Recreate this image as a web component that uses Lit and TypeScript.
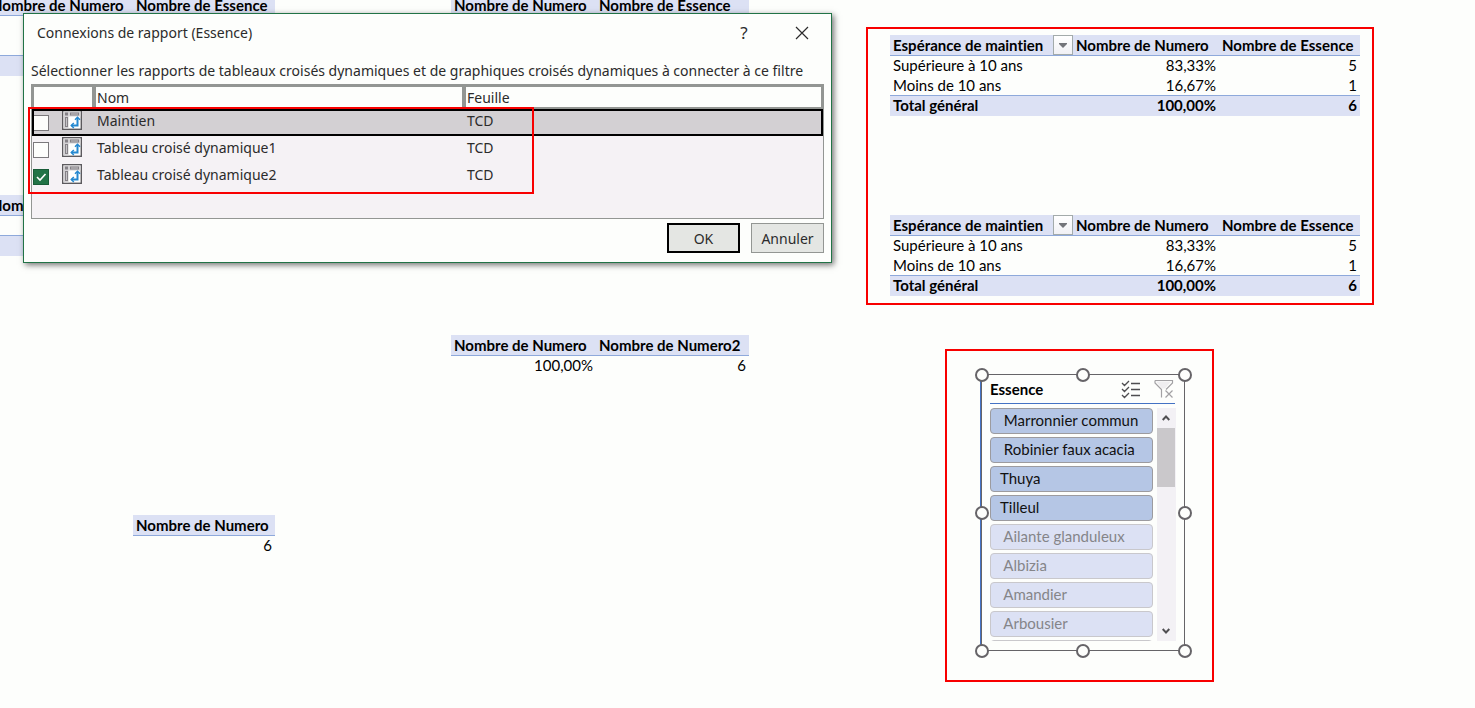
import { LitElement, html, svg, css, nothing } from "lit";
import { customElement, property } from "lit/decorators.js";
import { classMap } from "lit/directives/class-map.js";

@customElement("pivot-table")
class PivotTable extends LitElement {
  @property({ attribute: false }) heads: string[] = [];
  @property({ attribute: false }) rows: string[][] = [];
  @property({ attribute: false }) total: string[] | null = null;
  @property({ type: Boolean }) filter = false;

  static styles = css`
    :host { display: block; }
    table { border-collapse: separate; border-spacing: 0; table-layout: fixed; width: 100%; }
    th, td { box-sizing: border-box; height: 20px; padding: 0 3px; line-height: 18px; text-align: right; vertical-align: top; white-space: nowrap; }
    thead th { height: 21px; background: #dce1f4; border-bottom: 1px solid #8ea9db; text-align: left; font-weight: 700; line-height: 20px; }
    .label { text-align: left; }
    .closing td, .closing th { border-bottom: 1px solid #8ea9db; }
    tfoot td, tfoot th { background: #dce1f4; font-weight: 700; }
    th.label { font-weight: 400; }
    tfoot th.label { font-weight: 700; }
    .wide { width: 183px; padding-right: 0; }
    .num { width: 145px; }
    .wide + .num { width: 146px; }
    .field { display: flex; justify-content: space-between; align-items: center; }
    .drop { box-sizing: border-box; width: 20px; height: 20px; padding: 0; border: 1px solid #a3abab; background: linear-gradient(#fff, #f1f1f5); display: flex; align-items: center; justify-content: center; }
  `;

  render() {
    const cell = (v: string, i: number) =>
      this.filter && i === 0 ? html`<th scope="row" class="label">${v}</th>` : html`<td>${v}</td>`;
    return html`<table>
      <thead><tr>${this.heads.map((h, i) => this.filter && i === 0
        ? html`<th scope="col" class="wide"><div class="field">${h}
            <button class="drop" aria-label="Filtrer"><svg width="8" height="5" viewBox="0 0 8 5"><path d="M0 0H8V1L4 5L0 1Z" fill="#73757a"/></svg></button></div></th>`
        : html`<th scope="col" class=${classMap({ num: i < this.heads.length - 1 })}>${h}</th>`)}</tr></thead>
      <tbody>${this.rows.map((r, i) => html`<tr class=${classMap({ closing: !!this.total && i === this.rows.length - 1 })}>${r.map(cell)}</tr>`)}</tbody>
      ${this.total ? html`<tfoot><tr>${this.total.map(cell)}</tr></tfoot>` : nothing}
    </table>`;
  }
}

const pivotIcon = svg`
  <rect x=".7" y=".7" width="18.600" height="18.600" fill="#fdfefd" stroke="#5c5a5e" stroke-width="1.400"/>
  <path d="M1.500 1.500H18.500V6.500H6.500V18.500H1.500Z" fill="#d3d1d4"/>
  <rect x="3.500" y="3" width="2" height="2" fill="#fff" stroke="#858287"/>
  <rect x="8.500" y="3" width="8" height="2" fill="#c6c4c7" stroke="#858287"/>
  <rect x="3.500" y="7.500" width="2" height="9" fill="#c6c4c7" stroke="#858287"/>
  <path d="M15.500 8V15.500H9.500" fill="none" stroke="#2488d0" stroke-width="2"/>
  <path d="M13 9.800L15.500 7.300L18 9.800M11.800 13L9.300 15.500L11.800 18" fill="none" stroke="#2488d0" stroke-width="1.500"/>`;

@customElement("report-connections")
class ReportConnections extends LitElement {
  static styles = css`
    :host { display: block; box-sizing: border-box; padding: 0 7px 9px; background: #fdfefc; color: #2b2b2b; border: 1px solid #217346; box-shadow: 2px 2px 6px rgba(0, 0, 0, .55); font: 14px/20px "Noto Sans", "Open Sans", sans-serif; }
    header { display: flex; align-items: center; height: 38px; padding: 0 7px 0 6px; }
    h2 { flex: 1; margin: 0; font: inherit; }
    .glyph { width: 28px; height: 28px; margin-right: 30px; padding: 0; border: 0; background: none; color: inherit; font: 17px/28px "Noto Sans", sans-serif; display: flex; align-items: center; justify-content: center; }
    .glyph:last-child { margin-right: 1px; }
    p { margin: 9px 0 3px; white-space: nowrap; }
    .list { position: relative; box-sizing: border-box; height: 135px; border: 1px solid #939693; background: #f5f2f5; }
    table { width: 100%; border-collapse: separate; border-spacing: 0; table-layout: fixed; }
    th, td { box-sizing: border-box; padding: 0 0 0 1px; text-align: left; font-weight: 400; vertical-align: top; }
    thead th { height: 24px; line-height: 20px; vertical-align: bottom; border: solid #939693; border-width: 2px 4px 2px 0; background: #fdfefc; padding-top: 1px; line-height: 19px; }
    thead th:first-child { width: 64px; border-left-width: 2px; }
    thead th:nth-child(2) { width: 370px; }
    thead th:last-child { border-right-width: 2px; }
    tbody td { height: 27px; line-height: 24px; }
    .selected { background: #d3d0d3; outline: 2px solid #000; outline-offset: -2px; }
    .pick { display: flex; align-items: flex-start; gap: 13px; padding-top: 1px; }
    input { appearance: none; box-sizing: border-box; width: 16px; height: 16px; margin: 5px 0 0; border: 1px solid #7b797c; background: #fdfefc; }
    input:checked { border-color: #185c37; background: #217346 url('data:image/svg+xml,<svg xmlns="http://www.w3.org/2000/svg" viewBox="0 0 14 14"><path d="M3 7l3 3 5.500-6" fill="none" stroke="white" stroke-width="1.600"/></svg>') center / 14px no-repeat; }
    .mark { position: absolute; left: -4px; top: 22px; box-sizing: border-box; width: 506px; height: 87px; border: 2px solid #f80000; pointer-events: none; }
    footer { display: flex; justify-content: flex-end; gap: 11px; margin-top: 4px; }
    .action { box-sizing: border-box; width: 73px; height: 30px; padding: 1px 0 0; border: 1px solid #939693; background: #e4e6e3; color: inherit; font: inherit; }
    .default { border: 2px solid #000; }
  `;

  render() {
    const rows = ["Maintien", "Tableau croisé dynamique1", "Tableau croisé dynamique2"];
    return html`
      <header>
        <h2>Connexions de rapport (Essence)</h2>
        <button class="glyph">?</button>
        <button class="glyph" aria-label="Fermer"><svg width="14" height="14" viewBox="0 0 14 14"><path d="M1 1L13 13M13 1L1 13" stroke="#2b2b2b" stroke-width="1.2"/></svg></button>
      </header>
      <p>Sélectionner les rapports de tableaux croisés dynamiques et de graphiques croisés dynamiques à connecter à ce filtre</p>
      <div class="list">
        <table>
          <thead><tr><th></th><th scope="col">Nom</th><th scope="col">Feuille</th></tr></thead>
          <tbody>${rows.map((name, i) => html`<tr class=${classMap({ selected: i === 0 })}>
            <td><div class="pick"><input type="checkbox" id="report${i}" .checked=${i === 2}><svg width="20" height="20" viewBox="0 0 20 20">${pivotIcon}</svg></div></td>
            <td><label for="report${i}">${name}</label></td><td>TCD</td></tr>`)}</tbody>
        </table>
        <div class="mark"></div>
      </div>
      <footer><button class="action default">OK</button><button class="action">Annuler</button></footer>`;
  }
}

@customElement("field-slicer")
class FieldSlicer extends LitElement {
  static styles = css`
    :host { display: block; position: relative; box-sizing: border-box; width: 204px; height: 277px; padding: 0 8px; border: 1px solid #666468; box-shadow: -1px 0 #4472c4; }
    header { display: flex; align-items: center; height: 28px; border-bottom: 1px solid #4472c4; margin-right: 1px; }
    h3 { flex: 1; margin: 0; font: inherit; font-weight: 700; }
    .tool { width: 20px; height: 20px; padding: 0; border: 0; background: none; display: flex; }
    .tool + .tool { margin: 0 1px 0 13px; }
    .body { display: flex; gap: 4px; height: 233px; margin-top: 4px; overflow: hidden; }
    ul { flex: 1; margin: 0; padding: 0; list-style: none; display: flex; flex-direction: column; gap: 3px; }
    .item { display: block; box-sizing: border-box; width: 100%; height: 26px; padding: 0 9px 2px; border: 1px solid #9c9b9f; border-radius: 4px; background: #b5c6e5; color: #111; font: inherit; line-height: 22px; text-align: left; white-space: pre; }
    .empty { border-color: #c9c8cc; background: #dce1f4; color: #858589; }
    .scroll { width: 19px; background: #f3f1f5; display: flex; flex-direction: column; }
    .arrow { width: 18px; height: 20px; padding: 0; border: 0; background: none; display: flex; align-items: center; justify-content: center; }
    .track { flex: 1; }
    .thumb { width: 18px; height: 59px; background: #cac8cb; }
    .grip { position: absolute; box-sizing: border-box; width: 14px; height: 14px; border: 2px solid #666468; border-radius: 50%; background: #fdfefc; transform: translate(-50%, -50%); }
    .l { left: 0; } .c { left: 50%; } .r { left: calc(100% + 1px); }
    .t { top: 0; } .m { top: 50%; } .b { top: calc(100% + 1px); }
  `;

  render() {
    const items = [" Marronnier commun", " Robinier faux acacia", "Thuya", "Tilleul", " Ailante glanduleux", " Albizia", " Amandier", " Arbousier", ""];
    return html`
      <header><h3>Essence</h3>
        <button class="tool" aria-label="Sélection multiple"><svg width="20" height="20" viewBox="0 0 20 20" fill="none" stroke="#4e4d50" stroke-width="1.3"><path d="M1 4L3.500 6.500L8 2M1 10L3.500 12.500L8 8M1 16L3.500 18.500L8 14M10 4.500H19M10 10.500H19M10 16.500H19"/></svg></button>
        <button class="tool" aria-label="Effacer le filtre"><svg width="20" height="20" viewBox="0 0 20 20" fill="none" stroke="#a2a1a4" stroke-width="1.2"><path d="M2 2.500H17L11 9.500H8Z" fill="#efeef0" stroke="none"/><path d="M1 1.500H18.500V4L12 10.500M1 1.500V4L7.500 10.500V18.500"/><path d="M11.500 11.500L18.500 18.500M18.500 11.500L11.500 18.500"/></svg></button>
      </header>
      <div class="body">
        <ul>${items.map((t, i) => html`<li><button class=${classMap({ item: true, empty: i > 3 })}>${t}</button></li>`)}</ul>
        <div class="scroll">
          <button class="arrow" aria-label="Monter"><svg width="8" height="6" viewBox="0 0 8 6"><path d="M.7 5L4 1.500L7.300 5" fill="none" stroke="#504f52" stroke-width="1.9"/></svg></button>
          <div class="track"><div class="thumb"></div></div>
          <button class="arrow" aria-label="Descendre"><svg width="8" height="6" viewBox="0 0 8 6"><path d="M.7 1L4 4.500L7.300 1" fill="none" stroke="#504f52" stroke-width="1.9"/></svg></button>
        </div>
      </div>
      ${["l t", "c t", "r t", "l m", "r m", "l b", "c b", "r b"].map((p) => html`<span class="grip ${p}"></span>`)}`;
  }
}

@customElement("app-root")
class AppRoot extends LitElement {
  static styles = css`
    :host { display: block; position: relative; min-height: 100vh; overflow: hidden; background: #fdfefc; color: #000; font: 15px/20px Lato, "Open Sans", sans-serif; font-variant-ligatures: none; }
    main { display: grid; grid-template-columns: 275px 298px 508px; justify-content: start; align-items: start; }
    main { grid-template-columns: 275px 474px 625px; }
    .left, .middle { display: flex; flex-direction: column; align-items: flex-end; margin-top: -5px; }
    .left pivot-table { width: 287px; }
    .left pivot-table:nth-child(2) { margin-top: 119px; }
    .left pivot-table:last-child { width: 142px; margin-top: 259px; }
    .middle { gap: 319px; }
    .middle pivot-table { width: 298px; }
    .right { padding: 27px 0 26px 117px; }
    .frame { box-sizing: border-box; border: 2px solid #f80000; }
    .tables { display: flex; flex-direction: column; gap: 99px; padding: 6px 12px 7px 22px; }
    .slicer { width: fit-content; margin: 44px 0 0 79px; padding: 23px 27px 29px 34px; }
    report-connections { position: absolute; left: 23px; top: 13px; width: 809px; }
  `;

  render() {
    const NUM = "Nombre de Numero", ESS = "Nombre de Essence";
    const heads = ["Espérance de maintien", NUM, ESS];
    const rows = [["Supérieure à 10 ans", "83,33%", "5"], ["Moins de 10 ans", "16,67%", "1"]];
    const total = ["Total général", "100,00%", "6"];
    const full = html`<pivot-table filter .heads=${heads} .rows=${rows} .total=${total}></pivot-table>`;
    return html`
      <main>
        <section class="left">
          <pivot-table .heads=${[NUM, ESS]} .rows=${[["", ""], ["", ""]]} .total=${["", ""]}></pivot-table>
          <pivot-table .heads=${[NUM, ""]} .rows=${[["", ""]]} .total=${["", ""]}></pivot-table>
          <pivot-table .heads=${[NUM]} .rows=${[["6"]]}></pivot-table>
        </section>
        <section class="middle">
          <pivot-table .heads=${[NUM, ESS]}></pivot-table>
          <pivot-table .heads=${[NUM, "Nombre de Numero2"]} .rows=${[["100,00%", "6"]]}></pivot-table>
        </section>
        <section class="right">
          <div class="frame tables">${full}${full}</div>
          <div class="frame slicer"><field-slicer></field-slicer></div>
        </section>
      </main>
      <report-connections role="dialog" aria-label="Connexions de rapport"></report-connections>`;
  }
}
